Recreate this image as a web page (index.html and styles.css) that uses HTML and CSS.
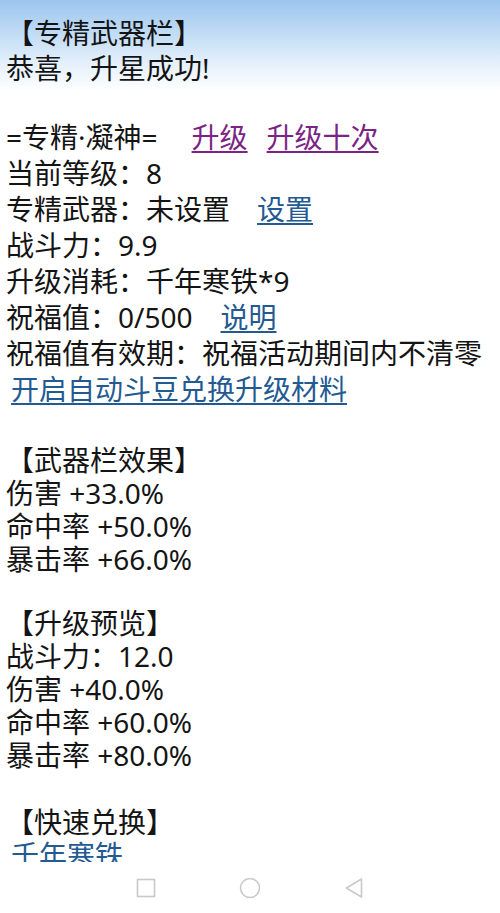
FILE: index.html
```html
<!DOCTYPE html>
<html lang="zh-CN">
<head>
<meta charset="utf-8">
<title>专精武器栏</title>
<link rel="stylesheet" href="styles.css">
</head>
<body>
<div class="page">
  <div class="block head">
    <div class="line">【专精武器栏】</div>
    <div class="line">恭喜，升星成功!</div>
  </div>
  <div class="block info">
    <div class="line">=专精<span class="dot">·</span>凝神=<a class="link visited gap-a" href="#">升级</a><a class="link visited gap-b" href="#">升级十次</a></div>
    <div class="line">当前等级：8</div>
    <div class="line">专精武器：未设置<a class="link gap-c" href="#">设置</a></div>
    <div class="line">战斗力：9.9</div>
    <div class="line">升级消耗：千年寒铁*9</div>
    <div class="line">祝福值：0/500<a class="link gap-d" href="#">说明</a></div>
    <div class="line">祝福值有效期：祝福活动期间内不清零</div>
    <div class="line"><a class="link indent" href="#">开启自动斗豆兑换升级材料</a></div>
  </div>
  <div class="block sec sec-effect">
    <div class="line">【武器栏效果】</div>
    <div class="line">伤害 +33.0%</div>
    <div class="line">命中率 +50.0%</div>
    <div class="line">暴击率 +66.0%</div>
  </div>
  <div class="block sec sec-preview">
    <div class="line">【升级预览】</div>
    <div class="line">战斗力：12.0</div>
    <div class="line">伤害 +40.0%</div>
    <div class="line">命中率 +60.0%</div>
    <div class="line">暴击率 +80.0%</div>
  </div>
  <div class="block sec sec-exchange">
    <div class="line">【快速兑换】</div>
    <div class="line"><a class="link indent" href="#">千年寒铁</a></div>
  </div>
</div>
<nav class="navbar">
  <svg class="nav-icon" width="20" height="20" viewBox="0 0 20 20"><rect x="1.5" y="1.5" width="17" height="17" fill="none" stroke="#c9c9c9" stroke-width="1.6"/></svg>
  <svg class="nav-icon" width="22" height="22" viewBox="0 0 22 22"><circle cx="11" cy="11" r="9.5" fill="none" stroke="#c9c9c9" stroke-width="1.6"/></svg>
  <svg class="nav-icon" width="20" height="22" viewBox="0 0 20 22"><path d="M17.5 2 L2.5 11 L17.5 20 Z" fill="none" stroke="#c9c9c9" stroke-width="1.6" stroke-linejoin="round"/></svg>
</nav>
</body>
</html>
```

FILE: styles.css
```css
html, body {
  margin: 0;
  padding: 0;
}
body {
  width: 500px;
  min-height: 913px;
  background: linear-gradient(to bottom, #9bc5ee 0px, #c3ddf5 35px, #e6f1fb 65px, #ffffff 92px, #ffffff 100%);
  font-family: "Noto Sans", "Noto Sans CJK SC", sans-serif;
  font-size: 28px;
  color: #141414;
  overflow: hidden;
}
.page {
  padding: 16px 0 0 6px;
}
.line {
  white-space: nowrap;
}
.head .line {
  line-height: 35px;
  height: 35px;
}
.info {
  margin-top: 33px;
}
.info .line {
  line-height: 36px;
  height: 36px;
}
.sec .line {
  line-height: 33px;
  height: 33px;
}
.sec-effect {
  margin-top: 37px;
}
.sec-preview {
  margin-top: 31px;
}
.sec-exchange {
  margin-top: 34px;
}
.dot {
  font-family: "Noto Sans", sans-serif;
}
.link {
  color: #245a92;
  text-decoration: underline;
  text-decoration-thickness: 2px;
  text-underline-offset: 3px;
}
.link.visited {
  color: #7b2485;
}
.gap-a {
  margin-left: 34px;
}
.gap-b {
  margin-left: 19px;
}
.gap-c {
  margin-left: 27px;
}
.gap-d {
  margin-left: 28px;
}
.indent {
  margin-left: 5px;
}
.navbar {
  position: fixed;
  left: 0;
  right: 0;
  bottom: 0;
  height: 51px;
  background: #ffffff;
  display: flex;
  align-items: center;
  justify-content: center;
  gap: 83px;
}
```
